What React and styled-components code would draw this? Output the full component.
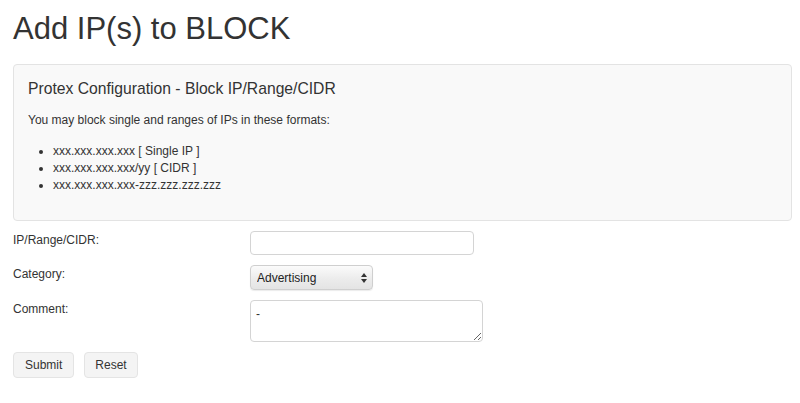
import React from "react";
import styled, { createGlobalStyle } from "styled-components";

const Global = createGlobalStyle`
  html, body { margin: 0; padding: 0; background: #fff; }
  body { font-family: "Liberation Sans", Arial, Helvetica, sans-serif; color: #333; }
  * { box-sizing: border-box; }
`;

const Page = styled.div`
  padding: 12px 8px 0 13px;
`;

const Title = styled.h1`
  margin: 0 0 18px;
  font-size: 31px;
  line-height: 1.1;
  font-weight: 400;
  color: #333;
`;

const Well = styled.div`
  background: #f9f9f9;
  border: 1px solid #e3e3e3;
  border-radius: 4px;
  padding: 15px 14px 26px;
`;

const WellTitle = styled.h4`
  margin: 0;
  font-size: 15.7px;
  line-height: 1.1;
  font-weight: 400;
  color: #333;
`;

const Intro = styled.p`
  margin: 15px 0 0;
  font-size: 12px;
  line-height: 17px;
`;

const Formats = styled.ul`
  margin: 14px 0 0;
  padding-left: 25px;
  font-size: 12px;
  line-height: 17px;
`;

const Form = styled.form`
  display: grid;
  grid-template-columns: 237px auto;
  row-gap: 10px;
  margin-top: 10px;
`;

const Label = styled.label`
  font-size: 12px;
  line-height: 17px;
  padding-top: 1px;
`;

const Field = styled.div`
  display: flex;
  align-items: flex-start;
`;

const TextInput = styled.input`
  width: 224px;
  height: 24px;
  border: 1px solid #d4d4d4;
  border-radius: 4px;
  background: #fff;
  font: 12px "Liberation Sans", Arial, sans-serif;
  padding: 0 6px;
  outline: none;
`;

const SelectWrap = styled.div`
  position: relative;
  width: 123px;
  height: 25px;
`;

const Select = styled.select`
  appearance: none;
  -webkit-appearance: none;
  width: 100%;
  height: 100%;
  border: 1px solid #cfcfcf;
  border-radius: 4px;
  background: linear-gradient(#fbfbfb, #ececec 55%, #e4e4e4);
  box-shadow: 0 1px 1px rgba(0, 0, 0, 0.08);
  font: 12px "Liberation Sans", Arial, sans-serif;
  color: #222;
  padding: 0 0 0 6px;
  outline: none;
`;

const Arrows = styled.svg`
  position: absolute;
  right: 6px;
  top: 8px;
  pointer-events: none;
`;

const TextArea = styled.textarea`
  width: 233px;
  height: 42px;
  border: 1px solid #d4d4d4;
  border-radius: 4px;
  background: #fff;
  font: 12px "Liberation Sans", Arial, sans-serif;
  color: #333;
  padding: 6px 5px;
  outline: none;
`;

const Actions = styled.div`
  grid-column: 1 / -1;
  display: flex;
  gap: 10px;
`;

const Button = styled.button`
  height: 26px;
  padding: 0 ${(p) => (p.$narrow ? 10 : 11)}px;
  border: 1px solid #e4e4e4;
  border-radius: 4px;
  background: #f4f4f4;
  font: 12px "Liberation Sans", Arial, sans-serif;
  color: #333;
`;

export default function App() {
  return (
    <Page>
      <Global />
      <Title>Add IP(s) to BLOCK</Title>
      <Well>
        <WellTitle>Protex Configuration - Block IP/Range/CIDR</WellTitle>
        <Intro>You may block single and ranges of IPs in these formats:</Intro>
        <Formats>
          <li>xxx.xxx.xxx.xxx [ Single IP ]</li>
          <li>xxx.xxx.xxx.xxx/yy [ CIDR ]</li>
          <li>xxx.xxx.xxx.xxx-zzz.zzz.zzz.zzz</li>
        </Formats>
      </Well>
      <Form onSubmit={(e) => e.preventDefault()}>
        <Label>IP/Range/CIDR:</Label>
        <Field>
          <TextInput type="text" />
        </Field>
        <Label>Category:</Label>
        <Field>
          <SelectWrap>
            <Select defaultValue="Advertising">
              <option>Advertising</option>
            </Select>
            <Arrows width="6" height="10" viewBox="0 0 6 10">
              <path d="M3 0 L6 4 L0 4 Z" fill="#333" />
              <path d="M0 6 L6 6 L3 10 Z" fill="#333" />
            </Arrows>
          </SelectWrap>
        </Field>
        <Label>Comment:</Label>
        <Field>
          <TextArea defaultValue="-" />
        </Field>
        <Actions>
          <Button type="submit">Submit</Button>
          <Button type="reset" $narrow>Reset</Button>
        </Actions>
      </Form>
    </Page>
  );
}
